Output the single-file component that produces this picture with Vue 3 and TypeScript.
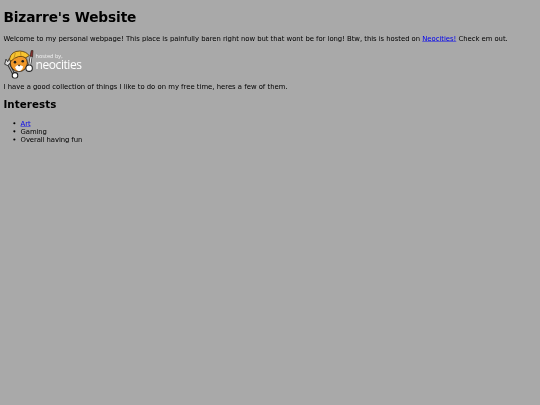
<script setup lang="ts">
const interests: { label: string; href?: string }[] = [
  { label: 'Art', href: '#' },
  { label: 'Gaming' },
  { label: 'Overall having fun' },
]
</script>

<template>
  <div class="viewport">
    <main class="page">
      <h1>Bizarre's Website</h1>
      <p class="welcome">Welcome to my personal webpage! This place is painfully baren right now but that wont be for long! Btw, this is hosted on <a href="#">Neocities!</a> Check em out.</p>
      <div class="badge">
        <svg class="cat" width="72" height="68" viewBox="0 0 72 68" aria-hidden="true">
          <path d="M10 30 L26 60" stroke="#2a2a2a" stroke-width="7"/>
          <path d="M10 30 L26 60" stroke="#a5a5a5" stroke-width="3"/>
          <path d="M3 34 L6 22 L10 28 L14 20 L17 30 L10 37Z" fill="#dcdcdc" stroke="#2a2a2a" stroke-width="2"/>
          <circle cx="27" cy="60" r="6.5" fill="#fff" stroke="#222" stroke-width="2.5"/>
          <circle cx="36" cy="31" r="20" fill="#f0982a" stroke="#2c2015" stroke-width="2"/>
          <path d="M14 22 Q18 3 38 3 Q54 4 60 14 L52 19 Q36 9 17 27Z" fill="#f7c430" stroke="#5c3f10" stroke-width="2"/>
          <path d="M24 22 L28 7 M40 5 L41 15" stroke="#c08a1c" stroke-width="2"/>
          <path d="M27 41 Q31 36 36 35 Q42 36 46 39 Q44 49 36 50 Q29 48 27 41Z" fill="#fff"/>
          <circle cx="27" cy="29" r="3" fill="#1c1c1c"/>
          <circle cx="45" cy="27" r="3" fill="#1c1c1c"/>
          <path d="M33 35 L40 35 L36.5 39Z" fill="#2c2015"/>
          <path d="M65 14 L61 38" stroke="#2a2a2a" stroke-width="6"/>
          <path d="M65 14 L61 38" stroke="#eee" stroke-width="3"/>
          <path d="M62 15 L65 2 L69 2 L68 16Z" fill="#8a2f2f" stroke="#2c2015" stroke-width="1.5"/>
          <circle cx="60" cy="43" r="7.5" fill="#fff" stroke="#222" stroke-width="2.5"/>
        </svg>
        <div class="badge-text">
          <span class="hosted">hosted by,</span>
          <span class="neo">neocities</span>
        </div>
      </div>
      <p class="collection">I have a good collection of things I like to do on my free time, heres a few of them.</p>
      <h2>Interests</h2>
      <ul>
        <li v-for="item in interests" :key="item.label">
          <a v-if="item.href" :href="item.href">{{ item.label }}</a>
          <template v-else>{{ item.label }}</template>
        </li>
      </ul>
    </main>
  </div>
</template>

<style>
html, body { margin: 0; background: #a9a9a9; overflow: hidden; }
</style>

<style scoped>
.viewport { width: 540px; height: 405px; overflow: hidden; }
.page {
  box-sizing: border-box;
  width: 1260px;
  height: 945px;
  padding: 0.4px 8px 0;
  transform: scale(0.42857);
  transform-origin: 0 0;
  filter: blur(0.8px);
  font-family: "DejaVu Sans", sans-serif;
  font-size: 16px;
  color: #000;
}
h1 { font-size: 32px; margin: 21.44px 0; letter-spacing: -0.27px; }
p { margin: 16px 0; }
.welcome { letter-spacing: -0.08px; }
a { color: #0000ee; }
.badge { display: flex; align-items: flex-start; height: 69px; margin: 14px 0 0; }
.cat { flex: none; }
.badge-text { display: flex; flex-direction: column; margin: 9px 0 0 3px; color: #fff; font-family: "Open Sans", sans-serif; }
.hosted { font-size: 13px; line-height: 12px; opacity: .85; }
.neo { font-size: 28px; line-height: 28px; letter-spacing: -1px; }
.collection { margin-top: 8px; }
h2 { font-size: 24px; margin: 19px 0; letter-spacing: 0.2px; }
ul { margin: 16px 0; padding-left: 40px; letter-spacing: -0.2px; }
</style>
